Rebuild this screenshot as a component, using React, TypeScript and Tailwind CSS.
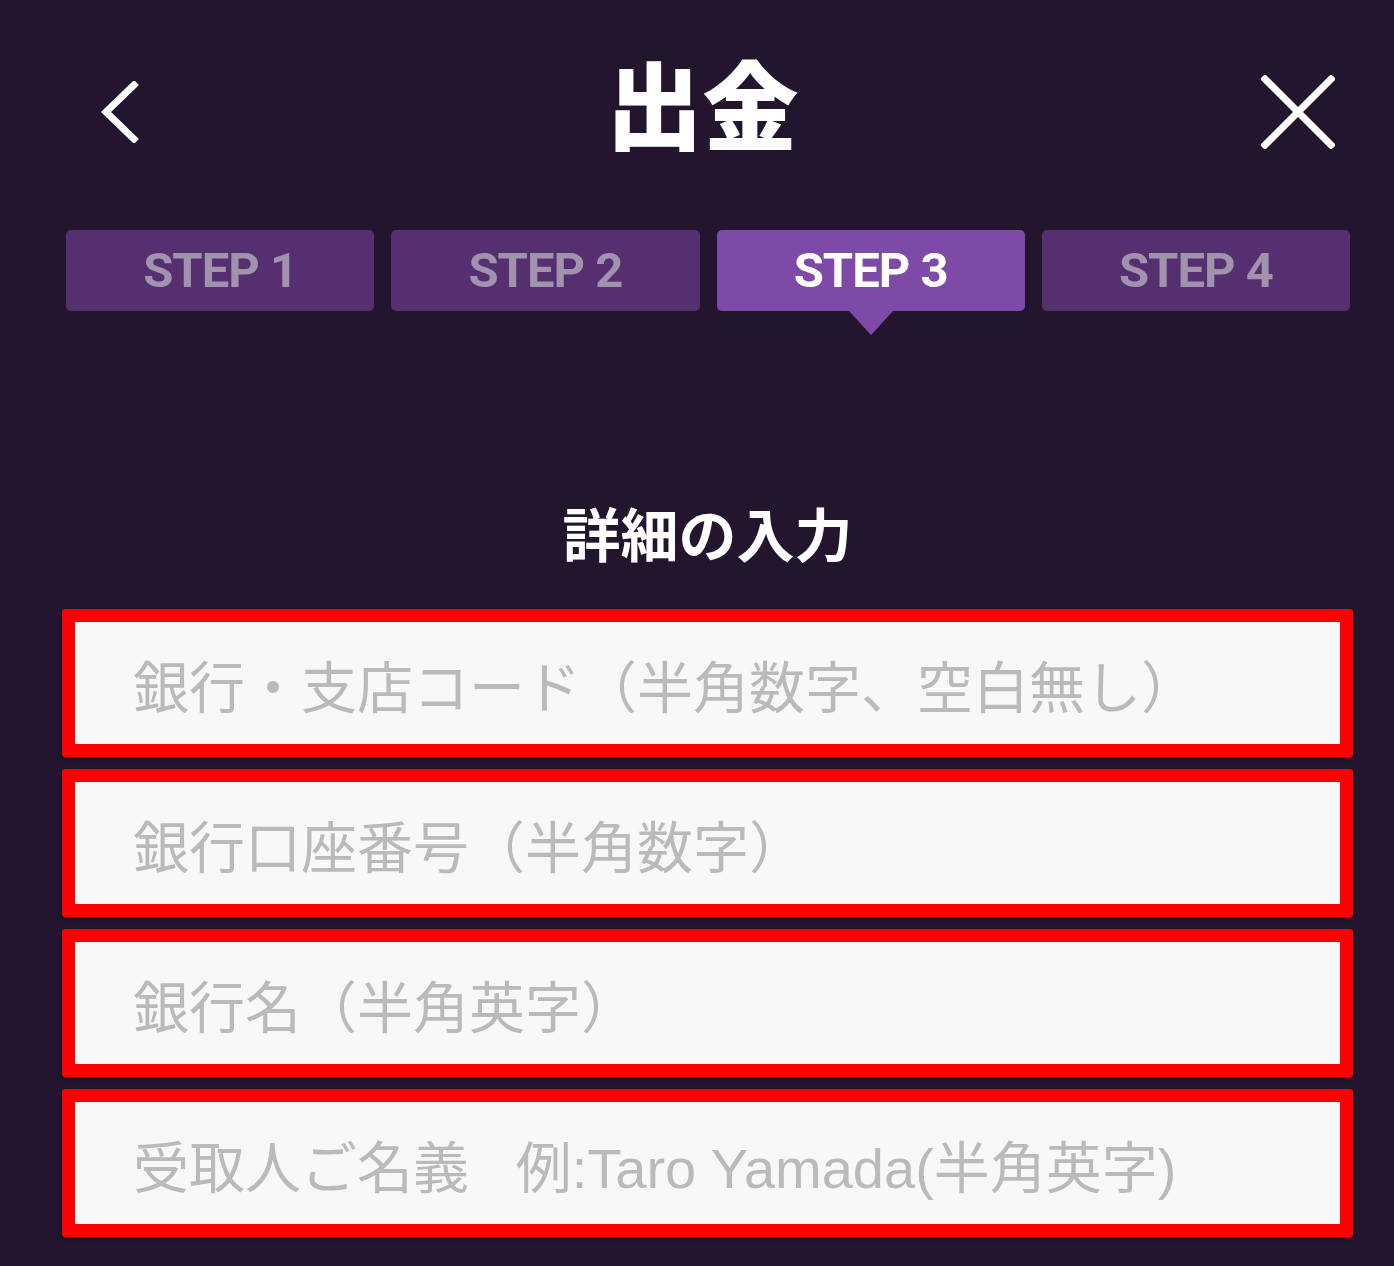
import type React from "react";

const steps = ["STEP 1", "STEP 2", "STEP 3", "STEP 4"];
const activeStep = 2;

const fields = [
  "銀行・支店コード（半角数字、空白無し）",
  "銀行口座番号（半角数字）",
  "銀行名（半角英字）",
  "受取人ご名義   例:Taro Yamada(半角英字)",
];

const jpFont = "font-['Noto_Sans_CJK_JP','Noto_Sans',sans-serif]";
const inputFont = "font-['Liberation_Sans','Noto_Sans_CJK_JP',sans-serif]";

const StepTab: React.FC<{ label: string; active: boolean }> = ({ label, active }) => (
  <div
    className={`relative flex h-[81px] items-center justify-center rounded-[5px] font-['Roboto','Liberation_Sans',sans-serif] text-[49px] font-bold tracking-[-1px] ${
      active ? "bg-[#7e4aa8] text-white" : "bg-[#552f70] text-[#a193ad]"
    }`}
  >
    {label}
    {active && (
      <span className="absolute left-1/2 top-full -translate-x-1/2 border-x-[22px] border-t-[24px] border-x-transparent border-t-[#7e4aa8]" />
    )}
  </div>
);

const App: React.FC = () => {
  return (
    <div className={`min-h-[1266px] bg-[#24152f] pl-[62px] pr-[41px] ${jpFont}`}>
      <header className="flex h-[224px] items-center justify-between">
        <button className="ml-[34px] flex h-[64px] w-[48px] items-center justify-center text-white">
          <svg width="44" height="62" viewBox="0 0 44 62" fill="none">
            <path d="M36 4 L8 31 L36 58" stroke="currentColor" strokeWidth="7" strokeLinecap="square" />
          </svg>
        </button>
        <h1 className="-mt-[22px] text-[96px] font-black leading-none text-white">出金</h1>
        <button className="mr-[18px] flex h-[74px] w-[74px] items-center justify-center text-white">
          <svg width="74" height="74" viewBox="0 0 74 74" fill="none">
            <path d="M4 4 L70 70 M70 4 L4 70" stroke="currentColor" strokeWidth="7" strokeLinecap="square" />
          </svg>
        </button>
      </header>

      <div className="mt-[6px] grid grid-cols-4 gap-[17px] pl-[4px] pr-[3px]">
        {steps.map((s, i) => (
          <StepTab key={s} label={s} active={i === activeStep} />
        ))}
      </div>

      <h2 className="mt-[192px] text-center text-[58px] font-bold leading-none text-white">
        詳細の入力
      </h2>

      <div className="mt-[48px] flex flex-col gap-[12px]">
        {fields.map((f) => (
          <div
            key={f}
            className="h-[148px] rounded-[3px] border-[13px] border-[#ff0000] bg-[#f8f8f8] shadow-[0_2px_3px_rgba(0,0,0,0.5)]"
          >
            <input
              type="text"
              placeholder={f}
              className={`h-full w-full bg-transparent pl-[58px] pt-[10px] text-[56px] text-[#3a3a3a] outline-none placeholder:text-[#bababa] ${inputFont}`}
            />
          </div>
        ))}
      </div>
    </div>
  );
};

export default App;
